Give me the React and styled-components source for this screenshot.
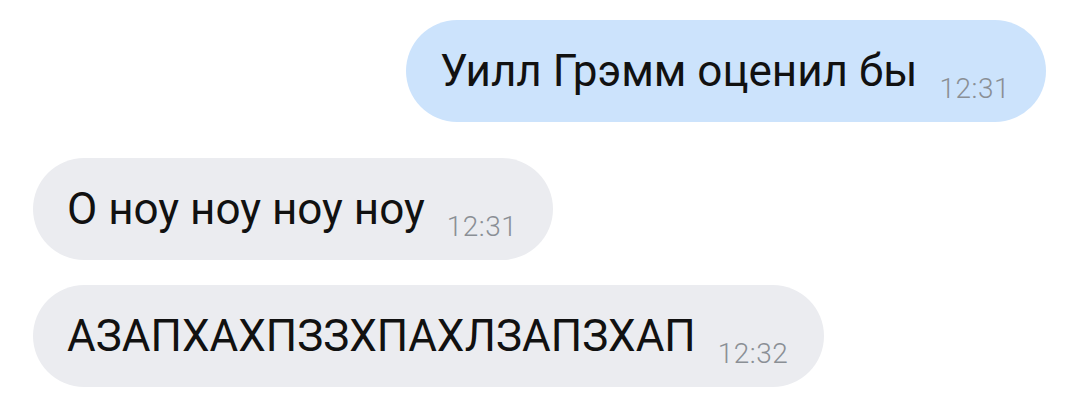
import styled, { createGlobalStyle } from "styled-components";

const GlobalStyle = createGlobalStyle`
  body {
    margin: 0;
    background: #ffffff;
    font-family: Roboto, "Noto Sans", sans-serif;
  }
`;

const Chat = styled.div`
  width: 1080px;
  height: 414px;
  box-sizing: border-box;
  padding: 20px 34px 0 33px;
  display: flex;
  flex-direction: column;
`;

const Row = styled.div`
  display: flex;
  justify-content: ${(p) => (p.out ? "flex-end" : "flex-start")};
  margin-top: ${(p) => p.gap || 0}px;
`;

const Bubble = styled.div`
  display: flex;
  align-items: flex-end;
  height: 102px;
  box-sizing: border-box;
  padding: 0 36px 19px 34px;
  border-radius: 51px;
  background: ${(p) => (p.out ? "#cce3fc" : "#ebecf0")};
`;

const Text = styled.span`
  font-size: 44px;
  line-height: 44px;
  color: #111111;
  padding-bottom: 10px;
`;

const Time = styled.span`
  font-size: 28px;
  line-height: 28px;
  font-weight: 300;
  letter-spacing: 0.5px;
  color: #8a8f95;
  margin-left: 22px;
`;

const messages = [
  { out: true, text: "Уилл Грэмм оценил бы", time: "12:31", gap: 0 },
  { out: false, text: "О ноу ноу ноу ноу", time: "12:31", gap: 36 },
  { out: false, text: "АЗАПХАХПЗЗХПАХЛЗАПЗХАП", time: "12:32", gap: 25 },
];

export default function App() {
  return (
    <>
      <GlobalStyle />
      <Chat>
        {messages.map((m, i) => (
          <Row key={i} out={m.out} gap={m.gap}>
            <Bubble out={m.out}>
              <Text>{m.text}</Text>
              <Time>{m.time}</Time>
            </Bubble>
          </Row>
        ))}
      </Chat>
    </>
  );
}
